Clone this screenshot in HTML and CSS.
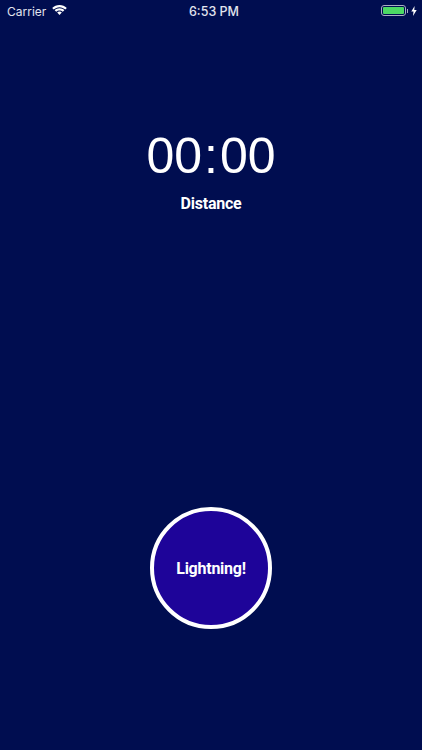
FILE: index.html
```html
<!DOCTYPE html>
<html lang="en">
<head>
    <meta charset="UTF-8">
    <meta name="viewport" content="width=device-width, initial-scale=1.0">
    <title>Lightning</title>
    <link rel="stylesheet" href="styles.css">
</head>
<body>
    <div class="status-bar">
        <div class="status-left">
            <span>Carrier</span>
            <svg class="wifi" width="15" height="11" viewBox="0 0 15 11">
                <path fill="#fff" d="M7.500 0C4.700 0 2.100 1.100.2 3l1.500 1.600C3.200 3.100 5.200 2.200 7.500 2.200s4.300.9 5.800 2.400L14.800 3C12.900 1.100 10.300 0 7.500 0z"/>
                <path fill="#fff" d="M7.500 3.300c-1.900 0-3.500.7-4.800 1.900l1.500 1.600c.9-.8 2-1.300 3.300-1.300s2.400.5 3.300 1.300l1.500-1.600c-1.300-1.200-2.900-1.900-4.800-1.900z"/>
                <path fill="#fff" d="M7.500 6.600c-.9 0-1.700.3-2.300.9l2.300 2.500 2.300-2.500c-.6-.6-1.400-.9-2.300-.9z"/>
            </svg>
        </div>
        <div class="status-time">6:53 PM</div>
        <div class="status-right">
            <div class="battery"><div class="battery-fill"></div></div>
            <div class="battery-cap"></div>
            <svg class="bolt" width="6" height="10" viewBox="0 0 6 10">
                <path fill="#fff" d="M3.600 0 .3 5.600h2.200L2 10l3.700-6H3.300z"/>
            </svg>
        </div>
    </div>

    <div class="readout">
        <div class="timer">00<span class="colon">:</span>00</div>
        <div class="label">Distance</div>
    </div>

    <div class="action">
        <div class="lightning-btn">Lightning!</div>
    </div>
</body>
</html>
```

FILE: styles.css
```css
html, body {
    height: 100%;
}
body {
    margin: 0;
    height: 750px;
    overflow: hidden;
    background: #000d50;
    color: #fff;
    font-family: Roboto, "Liberation Sans", sans-serif;
    display: flex;
    flex-direction: column;
}
.status-bar {
    height: 22px;
    padding: 0 5px 0 7px;
    display: grid;
    grid-template-columns: 1fr auto 1fr;
    align-items: center;
    font-family: Inter, sans-serif;
    font-size: 12px;
    color: #e2e4ee;
}
.status-left {
    display: flex;
    align-items: center;
    gap: 6px;
}
.wifi {
    margin-bottom: 2px;
}
.status-time {
    font-size: 12.5px;
    font-weight: 500;
    padding-left: 4px;
}
.status-right {
    display: flex;
    align-items: center;
    justify-content: flex-end;
    margin-bottom: 1px;
}
.battery {
    width: 25px;
    height: 11px;
    box-sizing: border-box;
    border: 1px solid #a9adc2;
    border-radius: 3px;
    padding: 1px;
}
.battery-fill {
    height: 100%;
    background: #4cd964;
    border-radius: 1px;
}
.battery-cap {
    width: 1px;
    height: 4px;
    margin-left: 1px;
    background: #a9adc2;
}
.bolt {
    margin-left: 3px;
}
.readout {
    margin-top: 104px;
    text-align: center;
}
.timer {
    font-family: "Liberation Sans", Arial, sans-serif;
    font-size: 50px;
    line-height: 60px;
}
.colon {
    padding: 0 2px;
}
.label {
    margin-top: 8px;
    font-size: 16px;
    line-height: 20px;
    font-weight: 700;
    letter-spacing: -0.25px;
}
.action {
    margin-top: 293px;
    display: flex;
    justify-content: center;
}
.lightning-btn {
    width: 122px;
    height: 122px;
    box-sizing: border-box;
    border: 4px solid #fff;
    border-radius: 50%;
    background: #1e0499;
    display: flex;
    align-items: center;
    justify-content: center;
    font-size: 16px;
    font-weight: 700;
    letter-spacing: -0.25px;
}
```
